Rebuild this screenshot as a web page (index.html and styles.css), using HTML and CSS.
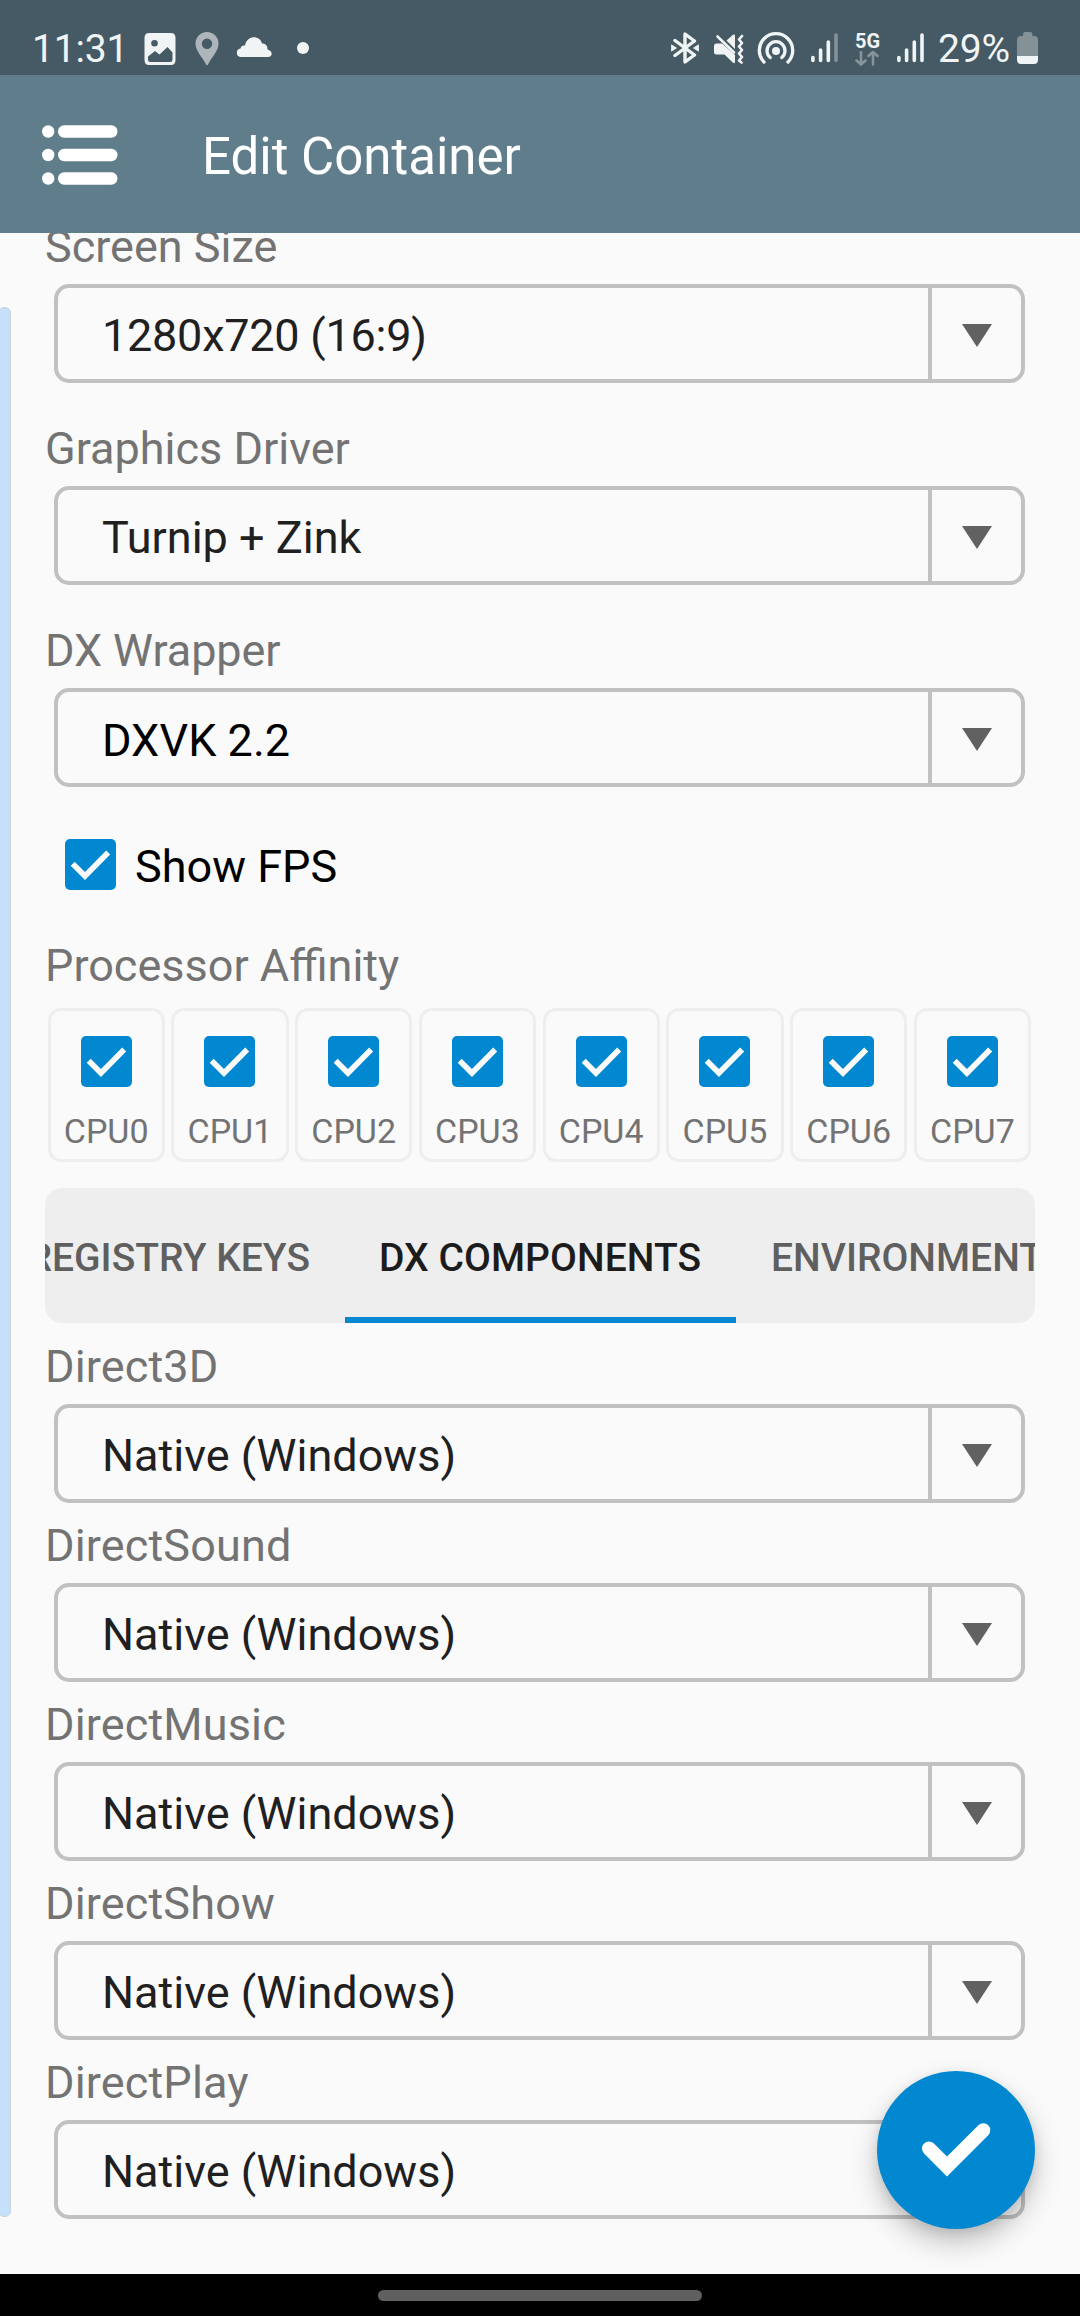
FILE: index.html
```html
<!DOCTYPE html>
<html lang="en">
<head>
<meta charset="utf-8">
<title>Edit Container</title>
<link rel="stylesheet" href="styles.css">
</head>
<body>
<svg class="defs" width="0" height="0" aria-hidden="true">
  <symbol id="checkbox" viewBox="0 0 51 51">
    <rect width="51" height="51" rx="5" fill="#0288d1"/>
    <path d="M7.700 24.700 20 37 43.200 13.500" fill="none" stroke="#fafafa" stroke-width="5.600"/>
  </symbol>
  <symbol id="caret" viewBox="0 0 30 23">
    <path d="M0 0H30L15 23Z" fill="#616161"/>
  </symbol>
</svg>
<div class="screen">
  <div class="status">
    <span class="clock">11:31</span>
    <svg class="s-image" width="32" height="32" viewBox="0 0 32 32"><path fill="#f1f4f5" fill-rule="evenodd" d="M5 0H27Q31.500 0 31.500 5V27Q31.500 32 27 32H5Q.5 32 .5 27V5Q.5 0 5 0ZM10.500 7A3.300 3.300 0 1 0 10.500 13.600 3.300 3.300 0 1 0 10.500 7ZM4 23.500V26.500Q4 29 6.500 29H26Q28.500 29 28.500 26.500V19.500L23.500 14 15.500 21.500 11 18Z"/></svg>
    <svg class="s-pin" width="24" height="34" viewBox="0 0 24 34"><path fill="#adb5ba" fill-rule="evenodd" d="M12 0A11.500 11.500 0 0 1 23.500 12C23.500 19 16 26 13 32.500Q12 34 11 32.500C8 26 .5 19 .5 12A11.500 11.500 0 0 1 12 0ZM12 6.500A5.200 5.200 0 1 0 12 16.900 5.200 5.200 0 1 0 12 6.500Z"/></svg>
    <svg class="s-cloud" width="36" height="20" viewBox="0 0 36 20"><path fill="#f1f4f5" d="M4.500 20A4.300 4.300 0 0 1 4.500 11.500Q5 8 9 8.500C11-2 24-2 26 6.500 30 6.500 31.500 9 31.500 12.500 37 13.500 37 20 32 20Z"/></svg>
    <span class="s-dot"></span>
    <div class="status-right">
      <svg width="28" height="32" viewBox="0 0 28 32"><g fill="none" stroke="#f1f4f5" stroke-width="3.400" stroke-linejoin="round" stroke-linecap="round"><path d="M4 8.500 23.500 23 14 30V2L23.500 9 4 23.500"/></g><path fill="#f1f4f5" d="M.5 12.800 5.500 16 .5 19.200ZM27.500 12.800 22.500 16 27.500 19.200Z" stroke="#f1f4f5" stroke-width=".8" stroke-linejoin="round"/></svg>
      <svg class="s-mute" width="30" height="30" viewBox="0 0 30 30"><path fill="#f1f4f5" d="M2.500 9.500H8L21 21V28Q21 30 19 28.800L10.500 20.500H2.500Q0 20.500 0 18V12Q0 9.500 2.500 9.500ZM12.500 6.500 19 .8Q21 0 21 2V15Z"/><path d="M3.500 2.500 20 18.500" stroke="#f1f4f5" stroke-width="2.600" stroke-linecap="round"/><path fill="none" stroke="#f1f4f5" stroke-width="2.600" stroke-linejoin="round" stroke-linecap="round" d="M28 2 25 5.500 28 9 25 12.500 28 16 25 19.500 28 23 25 26.500 27.500 28.500"/></svg>
      <svg class="s-hotspot" width="38" height="32" viewBox="0 0 38 32"><circle cx="19" cy="19" r="4" fill="#f1f4f5"/><g fill="none" stroke="#f1f4f5" stroke-width="3.300" stroke-linecap="round"><path d="M7 30A16.700 16.700 0 1 1 31 30"/><path d="M13.200 25.600A9 9 0 1 1 24.800 25.600"/></g></svg>
      <svg class="s-bars1" width="27" height="30" viewBox="0 0 27 30"><g stroke="#f1f4f5" stroke-width="3.600" stroke-linecap="round"><path d="M1.900 24.500V27.500M9.600 17V27.500M17.300 9V27.500"/><path stroke="#849197" d="M25 2V27.500"/></g></svg>
      <div class="net"><span class="net-name">5G</span><svg width="24" height="15" viewBox="0 0 24 15"><path fill="none" stroke="#87949a" stroke-width="2.600" stroke-linecap="round" d="M6 1V13.500M1.500 9.500 6 13.500 10.500 9.500M18 13.500V1M13.500 5 18 1 22.500 5"/></svg></div>
      <svg class="s-bars2" width="27" height="30" viewBox="0 0 27 30"><path stroke="#f1f4f5" stroke-width="3.600" stroke-linecap="round" d="M1.900 24.500V27.500M9.600 17V27.500M17.300 9V27.500M25 2V27.500"/></svg>
      <span class="percent">29%</span>
      <svg class="s-batt" width="21" height="32" viewBox="0 0 21 32"><path fill="#849197" d="M7.500 0H13.500Q15.500 0 15.500 4H17.500Q21 4 21 8V24H0V8Q0 4 3.500 4H6Q6 0 7.500 0Z"/><path fill="#f1f4f5" d="M0 24H21V27.500Q21 32 17 32H4Q0 32 0 27.500Z"/></svg>
    </div>
  </div>
  <header class="appbar">
    <svg width="76" height="60" viewBox="0 0 76 60"><g fill="#fff"><circle cx="6.200" cy="6.500" r="6.200"/><circle cx="6.200" cy="30" r="6.200"/><circle cx="6.200" cy="53.500" r="6.200"/><rect x="16" y=".3" width="59.500" height="12.400" rx="6.200"/><rect x="16" y="23.800" width="59.500" height="12.400" rx="6.200"/><rect x="16" y="47.300" width="59.500" height="12.400" rx="6.200"/></g></svg>
    <h1>Edit Container</h1>
  </header>
  <main class="content">
    <label class="label">Screen Size</label>
    <div class="select size"><span>1280x720 (16:9)</span><i><svg><use href="#caret"/></svg></i></div>
    <label class="label spaced">Graphics Driver</label>
    <div class="select"><span>Turnip + Zink</span><i><svg><use href="#caret"/></svg></i></div>
    <label class="label spaced tight">DX Wrapper</label>
    <div class="select strong"><span>DXVK 2.2</span><i><svg><use href="#caret"/></svg></i></div>
    <div class="fps"><svg class="check"><use href="#checkbox"/></svg><span>Show FPS</span></div>
    <label class="label">Processor Affinity</label>
    <div class="cpus">
      <div class="cpu"><svg class="check"><use href="#checkbox"/></svg><span>CPU0</span></div>
      <div class="cpu"><svg class="check"><use href="#checkbox"/></svg><span>CPU1</span></div>
      <div class="cpu"><svg class="check"><use href="#checkbox"/></svg><span>CPU2</span></div>
      <div class="cpu"><svg class="check"><use href="#checkbox"/></svg><span>CPU3</span></div>
      <div class="cpu"><svg class="check"><use href="#checkbox"/></svg><span>CPU4</span></div>
      <div class="cpu"><svg class="check"><use href="#checkbox"/></svg><span>CPU5</span></div>
      <div class="cpu"><svg class="check"><use href="#checkbox"/></svg><span>CPU6</span></div>
      <div class="cpu"><svg class="check"><use href="#checkbox"/></svg><span>CPU7</span></div>
    </div>
    <nav class="tabs">
      <span class="tab first">REGISTRY KEYS</span>
      <span class="tab active">DX COMPONENTS</span>
      <span class="tab">ENVIRONMENT</span>
    </nav>
    <section class="components">
      <div><label class="label">Direct3D</label><div class="select"><span>Native (Windows)</span><i><svg><use href="#caret"/></svg></i></div></div>
      <div><label class="label">DirectSound</label><div class="select"><span>Native (Windows)</span><i><svg><use href="#caret"/></svg></i></div></div>
      <div><label class="label">DirectMusic</label><div class="select"><span>Native (Windows)</span><i><svg><use href="#caret"/></svg></i></div></div>
      <div><label class="label">DirectShow</label><div class="select"><span>Native (Windows)</span><i><svg><use href="#caret"/></svg></i></div></div>
      <div><label class="label">DirectPlay</label><div class="select"><span>Native (Windows)</span><i><svg><use href="#caret"/></svg></i></div></div>
    </section>
    <div class="edge-handle"></div>
    <div class="fab"><svg width="76" height="60" viewBox="0 0 76 60"><path d="M11 28.500 29 46.500 65.300 10.300" fill="none" stroke="#fff" stroke-width="14" stroke-linecap="round"/></svg></div>
  </main>
  <footer class="navbar"><span></span></footer>
</div>
</body>
</html>
```
FILE: styles.css
```css
* { box-sizing: border-box; }
body { margin: 0; background: #000; font-family: Roboto, sans-serif; }
svg { display: block; flex: none; }
.defs { position: absolute; }
.screen { width: 1080px; height: 2316px; display: flex; flex-direction: column; overflow: hidden; }

.status { height: 75px; flex: none; background: #455a64; color: #f1f4f5; display: flex; align-items: flex-start; padding: 32px 42px 0 32px; }
.clock, .percent { font-size: 39px; line-height: 34px; }
.clock { width: 95px; letter-spacing: -.2px; }
.s-image { margin: 1px 0 0 17px; }
.s-pin { margin-left: 19px; }
.s-cloud { margin: 5px 0 0 17px; }
.s-dot { width: 12px; height: 12px; margin: 10px 0 0 25px; border-radius: 50%; background: #f1f4f5; }
.status-right { margin-left: auto; display: flex; align-items: flex-start; }
.s-mute { margin: 2px 0 0 15px; }
.s-hotspot { margin-left: 13px; }
.s-bars1 { margin: 1px 0 0 16px; }
.net { width: 24px; margin: 0 0 0 17px; }
.net-name { display: block; font-size: 20px; font-weight: 700; line-height: 18px; height: 19px; }
.s-bars2 { margin: 1px 0 0 18px; }
.percent { margin-left: 14px; width: 71px; margin-right: 8px; letter-spacing: -.2px; }

.appbar { height: 158px; flex: none; background: #607d8b; color: #fff; display: flex; align-items: center; padding-left: 42px; }
.appbar svg { margin-top: 1px; }
.appbar h1 { margin: 5px 0 0 84px; font-size: 51px; font-weight: 400; line-height: 60px; }

.content { flex: 1; min-height: 0; overflow: hidden; position: relative; background: #fafafa; padding: 0 45px; display: flow-root; }
.label { display: block; color: #737373; font-size: 45px; line-height: 53px; height: 53px; margin: -13px 0 11px; }
.label.spaced { margin-top: 39px; }
.label.tight { letter-spacing: -.1px; }
.select { margin: 0 10px 0 9px; height: 99px; border: 4px solid #c1c1c1; border-radius: 15px; display: flex; color: #202020; font-size: 45px; line-height: 96px; }
.select span { flex: 1; padding-left: 44px; }
.select i { width: 93px; border-left: 4px solid #c1c1c1; display: flex; align-items: center; padding-left: 30px; }
.select i svg { width: 30px; height: 23px; margin-top: 4px; }
.size { letter-spacing: -.25px; }
.strong { color: #000; line-height: 97px; }
.fps { display: flex; align-items: center; gap: 19px; margin: 52px 0 62px 20px; height: 51px; font-size: 45px; line-height: 51px; color: #000; }
.fps span { padding-top: 3px; }
.check { width: 51px; height: 51px; }
.cpus { display: grid; grid-template-columns: repeat(8, 1fr); gap: 6.5px; margin: 16px 4px 0 2.5px; }
.cpu { height: 154px; border: 3px solid #eee; border-radius: 13px; display: flex; flex-direction: column; align-items: center; padding-top: 25px; color: #737373; font-size: 34px; line-height: 40px; }
.cpu span { margin-top: 24px; }
.tabs { margin-top: 26px; height: 135px; border-radius: 17px; background: #eee; overflow: hidden; display: flex; }
.tab { flex: none; padding: 0 35px; line-height: 140px; font-size: 39px; font-weight: 500; color: #5f5f5f; white-space: nowrap; }
.tab.first { width: 300px; display: flex; justify-content: flex-end; }
.tab.active { width: 391px; padding: 0 34px; letter-spacing: .05px; color: #1c1c1c; border-bottom: 6px solid #0288d1; }
.components { padding-top: 17px; display: flex; flex-direction: column; gap: 16px; }
.components .label { margin-top: 0; letter-spacing: .15px; }

.edge-handle { position: absolute; left: -2px; top: 74px; width: 13px; height: 1910px; border: 1px solid #cdd3d8; border-radius: 6px; background: #c5e0fa; }
.fab { position: absolute; right: 45px; bottom: 45px; width: 158px; height: 158px; border-radius: 50%; background: #0288d1; display: flex; align-items: center; justify-content: center; box-shadow: 0 14px 28px rgba(0,0,0,.22), 0 4px 12px rgba(0,0,0,.1); }

.navbar { height: 42px; flex: none; background: #000; display: flex; justify-content: center; padding-top: 16px; }
.navbar span { width: 324px; height: 11px; border-radius: 6px; background: #5f5f5f; }
```
